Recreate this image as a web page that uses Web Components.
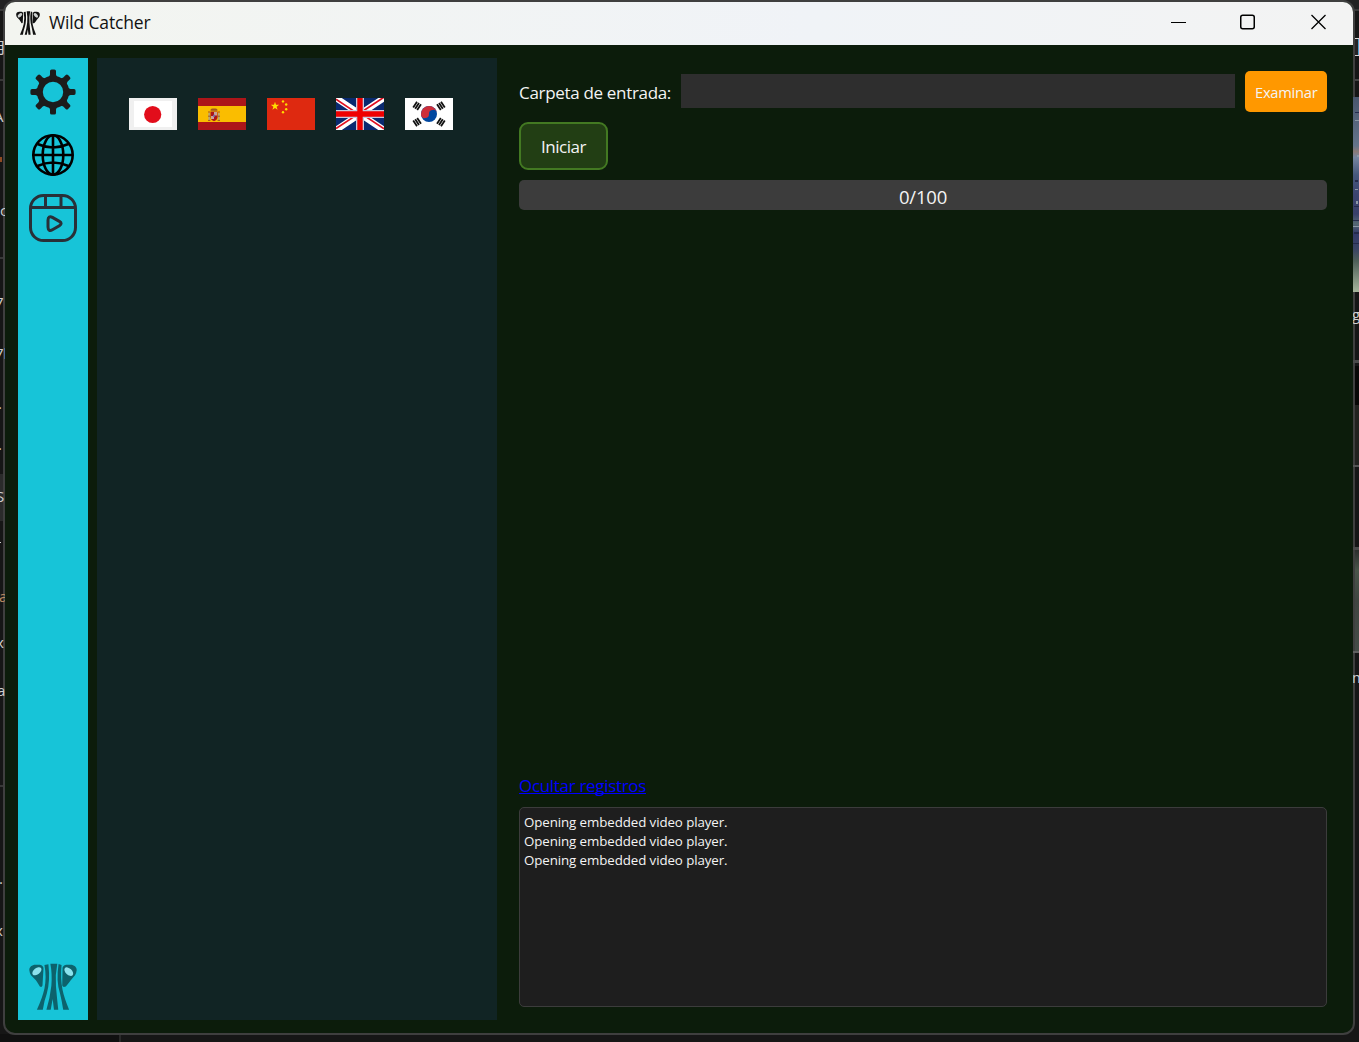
<!DOCTYPE html>
<html lang="es">
<head>
<meta charset="utf-8">
<title>Wild Catcher</title>
<style>
html,body{margin:0;height:100%;overflow:hidden;background:#161616}
body{font-family:"Open Sans","Noto Sans",sans-serif;position:relative}
</style>
</head>
<body>
<desk-top></desk-top>
<app-window></app-window>
<edge-labels></edge-labels>
<script>
const define=(name,html,after)=>customElements.define(name,class extends HTMLElement{
  connectedCallback(){
    if(this.shadowRoot)return;
    const t=document.createElement('template');
    t.innerHTML=html;
    this.attachShadow({mode:'open'}).append(t.content.cloneNode(true));
    if(after)after(this);
  }
});

// One line of text whose tracking is adjusted to a given advance width.
define('fit-text','<style>:host{display:inline-block;white-space:nowrap}span{display:inline-block}</style><span><slot></slot></span>',el=>{
  const s=el.shadowRoot.querySelector('span');
  const w=+el.getAttribute('width');
  const n=el.textContent.length;
  s.style.letterSpacing=((w-s.getBoundingClientRect().width)/n)+'px';
});

define('desk-top',`<style>
:host{position:absolute;inset:0;background:#161616;overflow:hidden}
svg{display:block}
</style>
<svg width="1359" height="1042" shape-rendering="crispEdges">
<rect width="1359" height="10" fill="#222"/><rect y="9" width="1359" height="2" fill="#383838"/>
<rect width="8" height="2" y="79" fill="#383838"/><rect width="8" height="2" y="257" fill="#383838"/>
<rect width="8" height="47" y="474" fill="#2b2b2b"/><rect width="8" height="2" y="785" fill="#383838"/>
<rect x="1350" width="9" y="38" height="18" fill="#d8d8d8"/><rect x="1350" width="9" y="39" height="16" fill="#262324"/><rect x="1358" y="39" width="1" height="16" fill="#4fa0d0"/>
<rect x="1350" width="9" y="79" height="2" fill="#444"/>
<rect x="1350" width="9" y="366" height="39" fill="#080706"/><rect x="1350" width="9" y="405" height="60" fill="#22221f"/>
<rect y="1034" width="120" height="8" fill="#101010"/><rect x="119" y="1034" width="2" height="8" fill="#292929"/>
</svg>`);

define('edge-labels',`<style>
:host{position:absolute;inset:0;pointer-events:none;overflow:hidden}
svg{display:block;font:15px "Open Sans","Noto Sans CJK SC",sans-serif;fill:#cfcfcf}
</style>
<svg width="1359" height="1042"><defs><clipPath id="c"><rect width="5" height="1042"/><rect x="1353" width="6" height="1042"/></clipPath>
<linearGradient id="a" x1="0" y1="0" x2="0" y2="1"><stop offset="0" stop-color="#49566d"/><stop offset=".25" stop-color="#64748a"/><stop offset=".28" stop-color="#8a7a78"/><stop offset=".31" stop-color="#7685a0"/><stop offset=".4" stop-color="#46587c"/><stop offset=".5" stop-color="#3c4470"/><stop offset=".6" stop-color="#39406a"/><stop offset=".65" stop-color="#566873"/><stop offset=".7" stop-color="#33396a"/><stop offset=".78" stop-color="#3a4464"/><stop offset=".84" stop-color="#4e5f58"/><stop offset="1" stop-color="#a7b59c"/></linearGradient>
<linearGradient id="b" x1="0" y1="0" x2="0" y2="1"><stop offset="0" stop-color="#2c2e2d"/><stop offset=".2" stop-color="#4a554a"/><stop offset=".5" stop-color="#404541"/><stop offset="1" stop-color="#454c47"/></linearGradient></defs>
<g shape-rendering="crispEdges"><rect x="1353" width="6" y="97" height="195" fill="url(#a)"/><path d="M1355 112h4v1h-4zM1355 180h3v2h-3zM1354 206h5v1h-5zM1353 220h6v1h-6zM1354 232h5v2h-5zM1353 243h6v1h-6z" fill="#252b4c"/><path d="M1355 120h4v1h-4zM1357 155h2v2h-2zM1355 189h3v1h-3zM1356 201h2v3h-2zM1353 226h6v1h-6z" fill="#8b98a6"/>
<rect x="1353" width="6" y="360" height="3" fill="#4a4a4a"/><rect x="1353" width="6" y="465" height="2" fill="#555"/><rect x="1353" width="6" y="547" height="3" fill="#4a4a4a"/>
<rect x="1355" width="4" y="550" height="101" fill="url(#b)"/><rect x="1353" width="6" y="651" height="2" fill="#606060"/></g>
<g clip-path="url(#c)"><text x="-9" y="53">月</text><text x="-6" y="122">A</text><text x="0" y="216">c</text><text x="-5" y="308">7</text><text x="-5" y="359">7l</text><text x="-2" y="409">.</text><text x="-2" y="450">.</text><text x="-4" y="502">S</text><text x="-1" y="602" fill="#b98a60">a</text><text x="-4" y="648">x</text><text x="-3" y="696">a</text><text x="-1" y="884">.</text><text x="-5" y="936">x</text><text x="1352" y="320">g</text><text x="1352" y="683">m</text>
<path d="M0 157h2v5H0z" fill="#8f4a22"/><path d="M0 542h1v1H0z"/></g></svg>`);

define('plant-logo',`<style>
:host{display:block;color:var(--ink)}
svg{display:block;width:100%;height:100%}
</style>
<svg viewBox="56 39 146 142" preserveAspectRatio="none" fill="currentColor">
<path d="M57 61C56 51 65 44 76 44h13c7 1 12 6 11 13l-3 50q-2 7-8 3Q84 101 77 91L62 76Q58 70 57 61z"/>
<path d="M201 61C202 51 193 44 182 44h-13c-7 1-12 6-11 13l-1 50q2 7 11 3q8-9 15-19L196 76Q200 70 201 61z"/>
<path d="M103 45l12-2Q121 95 110 132Q102 154 98 180H80Q97 144 103 116Q110 82 103 45z"/>
<path d="M155 45l-9-3Q138 92 150 130Q156 154 160 180H178Q163 145 158 120Q151 84 155 45z"/>
<path d="M121 41h21Q135 76 138 110Q141 145 145 180H132L128 148L122 180H109Q120 145 124 108Q127 72 121 41z"/>
<ellipse cx="80" cy="64" rx="16" ry="9.5" transform="rotate(-38 80 64)" style="fill:var(--shine)"/>
<ellipse cx="177" cy="65" rx="16" ry="9.5" transform="rotate(43 177 65)" style="fill:var(--shine)"/>
</svg>`);

define('title-bar',`<style>
:host{display:flex;align-items:center;height:43px;background:linear-gradient(90deg,#f3f5f0,#f0f3f7 60%,#f3f3f3);color:#111;box-sizing:border-box;padding:0 27px 0 11px;font-size:17.5px}
plant-logo{width:24px;height:24px;--ink:#111;--shine:#ccd0cf;margin:-2px 9px 0 0}
fit-text{flex:1;line-height:24px;margin-top:-3px}
.c{display:flex;align-items:center;gap:54px}
svg{display:block;margin-top:-3px}
</style>
<plant-logo></plant-logo><fit-text width="101.5">Wild Catcher</fit-text>
<div class="c">
<svg width="15" height="16" fill="none"><path d="M0 8.5h15" stroke="#000"/></svg>
<svg width="15" height="16" fill="none"><rect x=".75" y="1.25" width="13.5" height="13.5" rx="2" stroke="#000" stroke-width="1.5"/></svg>
<svg width="16" height="16" fill="none" style="margin-left:1px"><path d="M1.5 1l14 14M15.5 1L1.5 15" stroke="#000" stroke-width="1.3"/></svg>
</div>`);

define('side-bar',`<style>
:host{display:flex;flex-direction:column;align-items:center;width:70px;background:#17c4d8;padding:10px 0;box-sizing:border-box}
svg{display:block;width:48px;height:48px;margin-bottom:15px}
plant-logo{width:48px;height:47px;margin-top:auto;--ink:#0d626c;--shine:#8be2ed}
</style>
<svg viewBox="0 0 48 48"><g fill="#1c1c1c"><circle cx="24" cy="24" r="13.2" fill="none" stroke="#1c1c1c" stroke-width="6"/><g id="t"></g></g></svg>
<svg viewBox="0 0 48 48" fill="none" stroke="#000" stroke-width="2.6"><circle cx="24" cy="24" r="19.7"/><ellipse cx="24" cy="24" rx="10.3" ry="19.7"/><path d="M24 4v40M4 24h40M8.5 13Q24 20 39.5 13M8.5 35Q24 28 39.5 35"/></svg>
<svg viewBox="0 0 48 48" fill="none" stroke="#293038" stroke-width="3"><rect x="1.5" y="1.5" width="45" height="45" rx="13"/><path d="M2 13.5h44M16.5 2v11M32 2v11"/><path d="M19 26.2c0-3.4 1.8-4.3 4.4-2.8l7 4c2.3 1.4 2.3 2.9 0 4.3l-7 4.1c-2.6 1.5-4.4.5-4.4-2.8z"/></svg>
<plant-logo></plant-logo>`,el=>{
  let s='';
  for(let i=0;i<8;i++)s+=`<path transform="rotate(${i*45} 24 24)" d="M19.6 10l1.4-3.5V3Q21 1.4 22.7 1.4h2.6Q27 1.4 27 3v3.5l1.4 3.5z"/>`;
  el.shadowRoot.querySelector('#t').innerHTML=s;
});

define('language-panel',`<style>
:host{display:flex;gap:21px;width:400px;background:#112424;padding:40px 32px;box-sizing:border-box;align-items:flex-start}
svg{display:block;width:48px;height:32px;flex:none}
</style>
<svg viewBox="0 0 48 32"><path fill="#f0f0f0" d="M0 0h48v32H0z"/><path fill="#fff" d="M5 3h38v26H5z"/><circle cx="23.7" cy="16.5" r="8.6" fill="#e20d1b"/></svg>
<svg viewBox="0 0 48 32"><path fill="#ad1519" d="M0 0h48v32H0z"/><path fill="#fabd00" d="M0 8h48v16H0z"/>
<g><path fill="#ad1519" d="M12.5 13.5h7V20q-1 3-3.5 3.2Q13.5 23 12.5 20z"/><path fill="#c9a397" d="M16 14h3v3.5h-3zM13 18h3v3h-3z"/><path fill="#7565a0" d="M15 16.7h2v2h-2z"/><path fill="#a45720" d="M12.8 13q-1-2.7 2.2-2.5h2q3.2-.2 2.2 2.5z"/><path fill="#c38b16" d="M13 12.5h6v1h-6z"/><path stroke="#a9a090" stroke-width="1.3" d="M11.2 15v7M20.8 15v7"/><path stroke="#a35425" stroke-width="1" d="M10 14h2M20 14h2M10 22.4h2.4M19.6 22.4H22M10 18.2h2.6M19.5 18.2H22"/></g></svg>
<svg viewBox="0 0 48 32"><path fill="#de2910" d="M0 0h48v32H0z"/><g fill="#ffde00"><path d="M8 3.8l1 3h3.2L9.6 8.7l1 3.1L8 9.9l-2.6 1.9 1-3.1L3.8 6.8H7z"/><circle cx="16" cy="3.4" r="1.2"/><circle cx="19.2" cy="6.5" r="1.2"/><circle cx="19.2" cy="11.2" r="1.2"/><circle cx="16" cy="14.3" r="1.2"/></g></svg>
<svg viewBox="0 0 48 32"><path fill="#0a2a70" d="M0 0h48v32H0z"/><path stroke="#fff" stroke-width="6.4" d="M0 0l48 32M48 0L0 32"/><path stroke="#e01020" stroke-width="1.7" d="M0 1.2l22 14.7M48 30.8L26 16.1M48 -.8L24 15M0 30.6l22-14.5"/><path stroke="#c9c9dc" stroke-width="8" d="M24 0v32M0 16h48"/><path stroke="#f00000" stroke-width="5.4" d="M24 0v32M0 16h48"/></svg>
<svg viewBox="0 0 48 32"><path fill="#fff" d="M0 0h48v32H0z"/><circle cx="24" cy="16" r="8" fill="#0047a0"/><path fill="#cd2e3a" d="M17.3 11.6A8 8 0 1 1 30.7 20.4A4 4 0 0 0 24 16A4 4 0 0 1 17.3 11.6z" transform="rotate(-35 24 16)"/>
<g stroke="#111" stroke-width="1.8"><path d="M8.2 9.5l3.8-5.8M10.2 10.8L14 5M12.2 12l3.8-5.7"/><path d="M39.8 9.5L36 3.7M37.8 10.8L34 5M35.8 12L32 6.3"/><path d="M8.2 22.5l3.8 5.8M10.2 21.2L14 27M12.2 20l3.8 5.7"/><path d="M39.8 22.5L36 28.3M37.8 21.2L34 27M35.8 20L32 25.7"/></g></svg>`);

define('work-area',`<style>
:host{display:flex;flex-direction:column;width:808px;margin-left:22px;padding:13px 0;box-sizing:border-box;color:#f4f4f4}
.row{display:flex;align-items:center;height:41px;gap:10px;font-size:17px}
.label{width:152px;line-height:24px;padding-top:2px}
.in{width:554px;height:34px;background:#2e2e2e;margin-bottom:1px}
.ex{width:82px;height:41px;box-sizing:border-box;padding-left:10px;line-height:42px;border-radius:5px;background:#ff9800;font-size:14.7px;font-weight:400}
.go{width:89px;height:48px;box-sizing:border-box;border:2px solid #437922;border-radius:9px;background:#223e14;margin-top:10px;padding-left:20px;font-size:17px;line-height:45px}
.bar{height:30px;margin-top:10px;border-radius:5px;background:#3c3c3c;text-align:center;font-size:18.5px;line-height:34px}
.link{margin-top:auto;color:#00f;font-size:17px;font-weight:400;line-height:24px;margin-bottom:9px;align-self:flex-start;background:linear-gradient(#00f,#00f) 0 19px/100% 1px no-repeat}
.log{box-sizing:border-box;height:200px;border:1px solid #3c3c3c;border-radius:5px;background:#1e1e1e;padding:5px 4px;font-size:13.3px;line-height:19px;display:flex;flex-direction:column}
</style>
<div class="row"><div class="label"><fit-text width="152">Carpeta de entrada:</fit-text></div><div class="in"></div><div class="ex"><fit-text width="62.5">Examinar</fit-text></div></div>
<div class="go"><fit-text width="45">Iniciar</fit-text></div>
<div class="bar"><fit-text width="48">0/100</fit-text></div>
<div class="link"><fit-text width="127">Ocultar registros</fit-text></div>
<div class="log"><fit-text width="203.5">Opening embedded video player.</fit-text><fit-text width="203.5">Opening embedded video player.</fit-text><fit-text width="203.5">Opening embedded video player.</fit-text></div>`);

define('app-window',`<style>
:host{position:absolute;left:3px;top:0;width:1352px;height:1035px;box-sizing:border-box;border:2px solid #3f3f3f;border-radius:12px;overflow:hidden;background:#0c1c0b}
.body{display:flex;height:962px;padding:13px}
language-panel{margin-left:9px}
</style>
<title-bar></title-bar><div class="body"><side-bar></side-bar><language-panel></language-panel><work-area></work-area></div>`);
</script>
</body>
</html>
